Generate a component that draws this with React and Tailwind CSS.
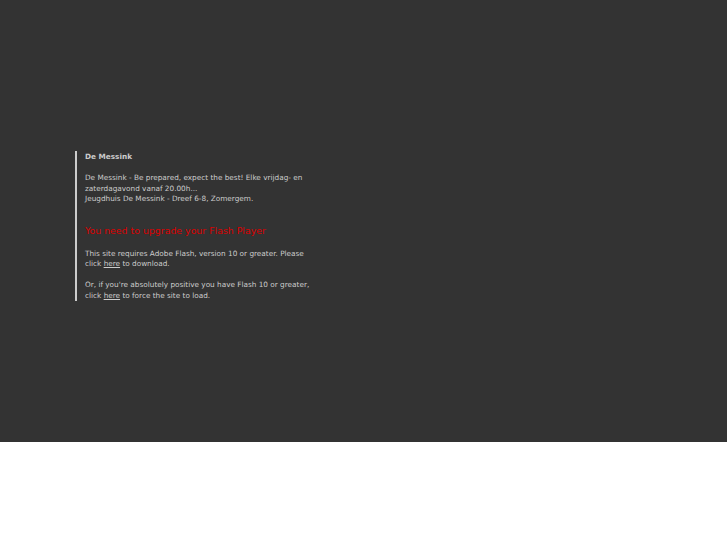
export default function App() {
  return (
    <div className="w-[727px] h-[545px] bg-white" style={{ fontFamily: '"DejaVu Sans", sans-serif' }}>
      <div className="h-[442px] bg-[#333333] pt-[151px] pl-[75px]">
        <div className="border-l-2 border-[#cccccc] pl-[8px] w-[240px] h-[150px] text-[#cccccc] text-[7.3px] leading-[10.5px]">
          <div className="font-bold pt-[1px]">De Messink</div>
          <p className="mt-[10.5px]">De Messink - Be prepared, expect the best! Elke vrijdag- en zaterdagavond vanaf 20.00h...<br />Jeugdhuis De Messink - Dreef 6-8, Zomergem.</p>
          <div className="text-[#dd0000] text-[9.4px] leading-[14px] mt-[19px]">You need to upgrade your Flash Player</div>
          <p className="mt-[11px]">This site requires Adobe Flash, version 10 or greater. Please click <span className="underline">here</span> to download.</p>
          <p className="mt-[10.5px]">Or, if you're absolutely positive you have Flash 10 or greater, click <span className="underline">here</span> to force the site to load.</p>
        </div>
      </div>
    </div>
  );
}
